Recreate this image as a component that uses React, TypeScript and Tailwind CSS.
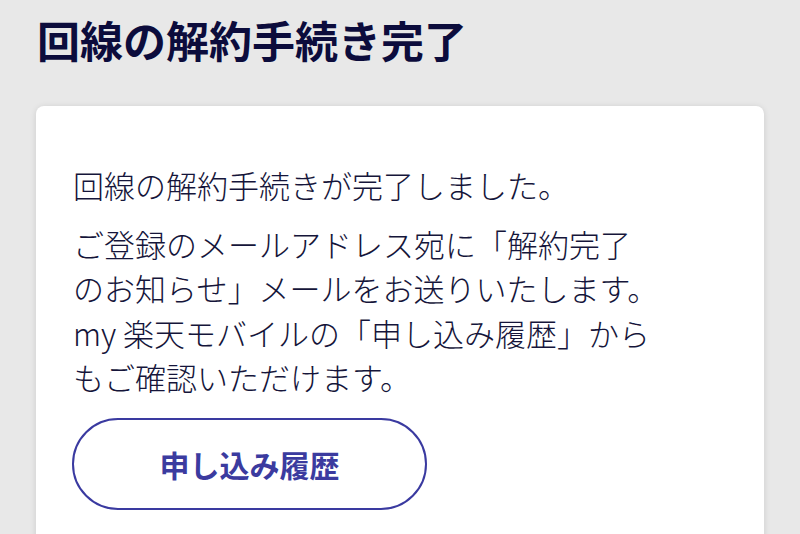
import React from "react";

export default function App() {
  return (
    <div
      className="w-[800px] h-[534px] overflow-hidden bg-[#e8e8e8]"
      style={{ fontFamily: '"Noto Sans CJK JP", "Noto Sans", sans-serif' }}
    >
      <h1 className="pl-[37px] pt-[11px] text-[43px] leading-[56px] font-bold text-[#0c0c3c]">
        回線の解約手続き完了
      </h1>
      <div className="mx-[36px] mt-[39px] h-[500px] rounded-[8px] bg-white shadow-[0_1px_6px_rgba(0,0,0,0.12)] px-[37px] pt-[57px] text-[#15153a] font-light">
        <p className="text-[31px] leading-[44px] whitespace-nowrap">回線の解約手続きが完了しました。</p>
        <p className="mt-[15px] text-[31px] leading-[44.3px] whitespace-nowrap">
          ご登録のメールアドレス宛に「解約完了
          <br />
          のお知らせ」メールをお送りいたします。
          <br />
          my 楽天モバイルの「申し込み履歴」から
          <br />
          もご確認いただけます。
        </p>
        <button className="mt-[19px] -ml-[1px] w-[355px] h-[92px] rounded-full border-2 border-[#3a3aa0] bg-white flex items-center justify-center text-[30px] font-bold text-[#3b3b9f]">
          申し込み履歴
        </button>
      </div>
    </div>
  );
}
